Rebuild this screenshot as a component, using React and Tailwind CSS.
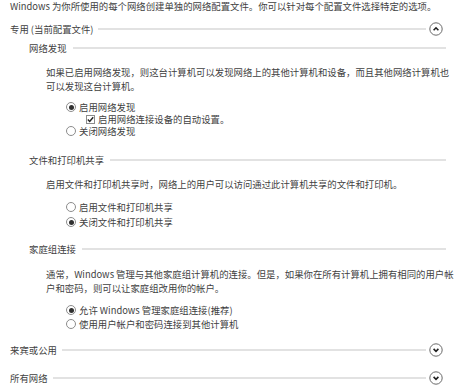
import React from "react";

const Line = ({ cls = "" }) => (
  <div className={"flex-1 h-[2px] bg-[#e2e2e2] " + cls} />
);

const CircleBtn = ({ up }) => (
  <svg width="14" height="14" viewBox="0 0 14 14" className="shrink-0">
    <circle cx="7" cy="7" r="6.2" fill="#fff" stroke="#6a6a6a" strokeWidth="1" />
    {up ? (
      <path d="M4.6 8.2 L7 5.8 L9.4 8.2" fill="none" stroke="#1e1e1e" strokeWidth="1.6" />
    ) : (
      <path d="M4.6 5.9 L7 8.3 L9.4 5.9" fill="none" stroke="#1e1e1e" strokeWidth="1.6" />
    )}
  </svg>
);

const Radio = ({ checked, label, cls = "" }) => (
  <div className={"flex items-center h-[12px] pl-[66px] " + cls}>
    <span className="w-[10px] h-[10px] rounded-full border border-[#8c8c8c] bg-white flex items-center justify-center shrink-0">
      {checked && <span className="w-[5px] h-[5px] rounded-full bg-[#303030]" />}
    </span>
    <span className="ml-[3px] whitespace-nowrap">{label}</span>
  </div>
);

export default function App() {
  return (
    <div
      className="w-[458px] h-[391px] bg-white text-[#3f3f3f] text-[9.4px] overflow-hidden flex flex-col"
      style={{ fontFamily: '"Noto Sans CJK SC", "Noto Sans", sans-serif' }}
    >
      <div className="h-[12px] leading-[12px] pl-[10px] whitespace-nowrap">
        Windows 为你所使用的每个网络创建单独的网络配置文件。你可以针对每个配置文件选择特定的选项。
      </div>

      <div className="mt-[10px] h-[14px] flex items-center pl-[10px] pr-[15px]">
        <span className="whitespace-nowrap">专用 (当前配置文件)</span>
        <Line cls="ml-[5px] mr-[3px]" />
        <CircleBtn up />
      </div>

      <div className="mt-[6px] h-[12px] flex items-center pl-[29px] pr-[12px]">
        <span className="whitespace-nowrap">网络发现</span>
        <Line cls="ml-[6px]" />
      </div>

      <div className="mt-[11px] pl-[46px] leading-[14px] whitespace-nowrap">
        如果已启用网络发现，则这台计算机可以发现网络上的其他计算机和设备，而且其他网络计算机也
        <br />
        可以发现这台计算机。
      </div>

      <Radio cls="mt-[8px]" checked label="启用网络发现" />
      <div className="flex items-center h-[12px] pl-[86px]">
        <span className="w-[9px] h-[9px] border border-[#8c8c8c] bg-white flex items-center justify-center shrink-0">
          <svg width="7" height="7" viewBox="0 0 7 7">
            <path d="M0.8 3.6 L2.7 5.5 L6.2 1.2" fill="none" stroke="#222" strokeWidth="1.4" />
          </svg>
        </span>
        <span className="ml-[3px] whitespace-nowrap">启用网络连接设备的自动设置。</span>
      </div>
      <Radio label="关闭网络发现" />

      <div className="mt-[17px] h-[12px] flex items-center pl-[29px] pr-[12px]">
        <span className="whitespace-nowrap">文件和打印机共享</span>
        <Line cls="ml-[6px]" />
      </div>

      <div className="mt-[11px] pl-[46px] leading-[14px] whitespace-nowrap">
        启用文件和打印机共享时，网络上的用户可以访问通过此计算机共享的文件和打印机。
      </div>

      <Radio cls="mt-[9px] h-[14px]" label="启用文件和打印机共享" />
      <Radio cls="mt-[2px]" checked label="关闭文件和打印机共享" />

      <div className="mt-[15px] h-[12px] flex items-center pl-[29px] pr-[12px]">
        <span className="whitespace-nowrap">家庭组连接</span>
        <Line cls="ml-[6px]" />
      </div>

      <div className="mt-[12px] pl-[46px] leading-[14px] whitespace-nowrap">
        通常，Windows 管理与其他家庭组计算机的连接。但是，如果你在所有计算机上拥有相同的用户帐
        <br />
        户和密码，则可以让家庭组改用你的帐户。
      </div>

      <Radio cls="mt-[9px]" checked label="允许 Windows 管理家庭组连接(推荐)" />
      <Radio cls="mt-[2px]" label="使用用户帐户和密码连接到其他计算机" />

      <div className="mt-[13px] h-[14px] flex items-center pl-[10px] pr-[15px]">
        <span className="whitespace-nowrap">来宾或公用</span>
        <Line cls="ml-[5px] mr-[3px]" />
        <CircleBtn />
      </div>

      <div className="mt-[14px] h-[14px] flex items-center pl-[10px] pr-[15px]">
        <span className="whitespace-nowrap">所有网络</span>
        <Line cls="ml-[5px] mr-[3px]" />
        <CircleBtn />
      </div>
    </div>
  );
}
